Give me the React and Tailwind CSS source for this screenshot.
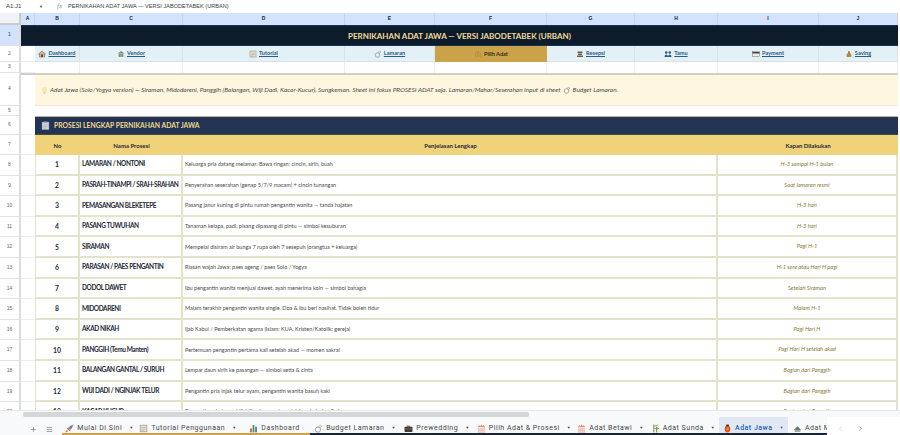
import React from "react";
import { Plus, Menu, ChevronLeft, ChevronRight } from "lucide-react";

const Svg = ({ s = 8, children }) => (
  <svg width={s} height={s} viewBox="0 0 16 16" className="shrink-0">{children}</svg>
);
const Note = ({ s }) => (
  <Svg s={s}><rect x="2" y="2" width="12" height="12" fill="#e8e4d8" stroke="#8a8878" strokeWidth="1" /><path d="M4 6h8M4 9h8M4 12h6" stroke="#a5a394" /></Svg>
);
const Ring = ({ s }) => (
  <Svg s={s}><circle cx="7" cy="10" r="4.6" fill="none" stroke="#77808a" strokeWidth="1.2" /><path d="M8 5l3-3 3 2-3 3z" fill="#dfe7ee" stroke="#77808a" strokeWidth="0.8" /></Svg>
);
const Home = ({ s }) => (
  <Svg s={s}><path d="M1 8l7-6 7 6-2 0v6H3V8z" fill="#c9b9a0" stroke="#7a4a32" /><rect x="6" y="9" width="4" height="5" fill="#7a4a32" /></Svg>
);
const Vendor = ({ s }) => (
  <Svg s={s}><path d="M1 7l7-5 7 5z" fill="#7d8c7d" /><rect x="3" y="7" width="10" height="7" fill="#aab3aa" /><path d="M5 8v6M8 8v6M11 8v6" stroke="#5f6b5f" /></Svg>
);
const Temple = ({ s, c = "#b48a3a" }) => (
  <Svg s={s}><path d="M2 5l6-3 6 3z" fill={c} /><path d="M3 6v8M6.5 6v8M9.5 6v8M13 6v8" stroke={c} strokeWidth="1.4" /></Svg>
);
const Resepsi = ({ s }) => (
  <Svg s={s}><path d="M3 3h10v3H3zM4 7h8v3H4zM2 11h12v3H2z" fill="#6b5a4a" /></Svg>
);
const Tamu = ({ s }) => (
  <Svg s={s}><circle cx="4.5" cy="5" r="2.6" fill="#355a80" /><circle cx="11.5" cy="5" r="2.6" fill="#355a80" /><path d="M1 14c0-7 7-7 7 0zM8 14c0-7 7-7 7 0z" fill="#355a80" /></Svg>
);
const Card = ({ s }) => (
  <Svg s={s}><rect x="1" y="3" width="14" height="10" fill="#f0ede0" stroke="#777" /><rect x="1" y="4" width="14" height="3" fill="#444" /></Svg>
);
const Bag = ({ s }) => (
  <Svg s={s}><path d="M6 2h4l-1 3c4 2 5 9 3 9H4C2 14 3 7 7 5z" fill="#b08a4a" /><path d="M6 5h4" stroke="#6e5425" /></Svg>
);
const Bulb = ({ s }) => (
  <Svg s={s}><path d="M8 1a5 5 0 0 0-3 9v2h6v-2a5 5 0 0 0-3-9z" fill="#fbe9a6" stroke="#dcc987" strokeWidth="0.7" /><rect x="6" y="13" width="4" height="2" fill="#bbb" /></Svg>
);
const Clip = ({ s }) => (
  <Svg s={s}><rect x="2" y="2" width="12" height="13" fill="#d8dce2" stroke="#aab0b8" /><rect x="5" y="1" width="6" height="3" fill="#9ca3ad" /><path d="M4 7h8M4 10h8M4 12.5h6" stroke="#8f96a1" /></Svg>
);
const Rocket = ({ s }) => (
  <Svg s={s}><path d="M5 10c1-5 5-8 10-9-1 5-4 9-9 10z" fill="#8a929c" /><path d="M1 15c0-3 1-4 3-4l1 1c0 2-1 3-4 3z" fill="#e8742c" /><circle cx="10.5" cy="5.5" r="1.4" fill="#3e6f9e" /><path d="M4 7l3-1-3 4zM9 12l1-3-4 3z" fill="#c0392b" /></Svg>
);
const Chart = ({ s }) => (
  <Svg s={s}><rect x="2" y="8" width="3" height="7" fill="#c0503c" /><rect x="6.5" y="2" width="3" height="13" fill="#3f8f4f" /><rect x="11" y="5" width="3" height="10" fill="#3572b0" /></Svg>
);
const Case = ({ s }) => (
  <Svg s={s}><rect x="1" y="5" width="14" height="9" rx="1" fill="#3d3d3d" /><rect x="5" y="3" width="6" height="2" fill="#7a5a33" /><rect x="1" y="8" width="14" height="1.5" fill="#8a6a3a" /></Svg>
);
const Gate = ({ s }) => (
  <Svg s={s}><rect x="2" y="5" width="12" height="10" fill="#f7ded8" stroke="#d99a8e" strokeWidth="0.7" /><path d="M2 5l2-3 2 2 2-3 2 3 2-2 2 3z" fill="#e3786a" /><path d="M4 9h8M4 12h8" stroke="#d99a8e" /></Svg>
);
const Bamboo = ({ s }) => (
  <Svg s={s}><path d="M5 1v14M10 5v10" stroke="#7f9a45" strokeWidth="2" /><path d="M6 4l6-2M6 8l7 1M10 6l5 3" stroke="#5d8a3a" strokeWidth="1.2" /></Svg>
);
const Lantern = ({ s }) => (
  <Svg s={s}><ellipse cx="8" cy="9" rx="5" ry="6" fill="#d9541e" /><rect x="5.5" y="1" width="5" height="3" fill="#3d3a36" /><ellipse cx="8" cy="9" rx="2" ry="3" fill="#f2954c" /></Svg>
);
const Roof = ({ s }) => (
  <Svg s={s}><path d="M1 11l7-7 7 7z" fill="#6d7670" /><rect x="3" y="11" width="10" height="3" fill="#9aa39c" /></Svg>
);

const Head = ({ children, on }) => (
  <div className={`flex items-center justify-center text-[5px] font-['Liberation_Sans',sans-serif] text-[#5f6368] border-b border-[#e2e3e4] border-r-2 border-r-[#dcdcdc] ${on ? "bg-[#d3e3fd] font-bold text-[#0b2a55]" : "bg-white"}`}>
    {children}
  </div>
);
const Fill = () => <div className="bg-white" />;
const A = () => <div className="bg-white border-b border-[#eceff1]" />;

const nav = [
  [Home, "Dashboard"],
  [Vendor, "Vendor"],
  [Note, "Tutorial"],
  [Ring, "Lamaran"],
  [Temple, "Pilih Adat", true],
  [Resepsi, "Resepsi"],
  [Tamu, "Tamu"],
  [Card, "Payment"],
  [Bag, "Saving"],
];

const rows = [
  ["LAMARAN / NONTONI", "Keluarga pria datang melamar. Bawa ringan: cincin, sirih, buah", "H-3 sampai H-1 bulan"],
  ["PASRAH-TINAMPI / SRAH-SRAHAN", "Penyerahan seserahan (genap 5/7/9 macam) + cincin tunangan", "Saat lamaran resmi"],
  ["PEMASANGAN BLEKETEPE", "Pasang janur kuning di pintu rumah pengantin wanita — tanda hajatan", "H-3 hari"],
  ["PASANG TUWUHAN", "Tanaman kelapa, padi, pisang dipasang di pintu — simbol kesuburan", "H-3 hari"],
  ["SIRAMAN", "Mempelai disiram air bunga 7 rupa oleh 7 sesepuh (orangtua + keluarga)", "Pagi H-1"],
  ["PARASAN / PAES PENGANTIN", "Riasan wajah Jawa: paes ageng / paes Solo / Yogya", "H-1 sore atau Hari H pagi"],
  ["DODOL DAWET", "Ibu pengantin wanita menjual dawet, ayah menerima koin — simbol bahagia", "Setelah Siraman"],
  ["MIDODARENI", "Malam terakhir pengantin wanita single. Doa & ibu beri nasihat. Tidak boleh tidur", "Malam H-1"],
  ["AKAD NIKAH", "Ijab Kabul / Pemberkatan agama (Islam: KUA, Kristen/Katolik: gereja)", "Pagi Hari H"],
  ["PANGGIH (Temu Manten)", "Pertemuan pengantin pertama kali setelah akad — momen sakral", "Pagi Hari H setelah akad"],
  ["BALANGAN GANTAL / SURUH", "Lempar daun sirih ke pasangan — simbol setia & cinta", "Bagian dari Panggih"],
  ["WIJI DADI / NGINJAK TELUR", "Pengantin pria injak telur ayam, pengantin wanita basuh kaki", "Bagian dari Panggih"],
  ["KACAR KUCUR", "Pengantin pria tuang biji-bijian ke pangkuan istri — simbol nafkah", "Bagian dari Panggih"],
];

const tabs = [
  [Rocket, "Mulai Di Sini", "w-[75px]", "border-[#c9a24a]"],
  [Note, "Tutorial Penggunaan", "w-[102px]", "border-[#c9a24a]"],
  [Chart, "Dashboard", "w-[71px]", "border-[#c9a24a]", true],
  [Ring, "Budget Lamaran", "w-[90px]", "border-[#1c2533]"],
  [Case, "Prewedding", "w-[74px]", "border-[#1c2533]"],
  [Gate, "Pilih Adat & Prosesi", "w-[100px]", "border-[#1c2533]"],
  [Gate, "Adat Betawi", "w-[73px]", "border-[#1c2533]"],
  [Bamboo, "Adat Sunda", "w-[72px]", "border-[#1c2533]"],
  [Lantern, "Adat Jawa", "w-[69px]", "border-[#1c2533]"],
];

const colNames = ["A", "B", "C", "D", "E", "F", "G", "H", "I", "J"];

export default function App() {
  return (
    <div className="w-[900px] h-[435px] overflow-hidden flex flex-col bg-white font-['Lato','Liberation_Sans',sans-serif]">
      <div className="h-[13px] shrink-0 flex items-center bg-white text-[#3c4043] font-['Liberation_Sans',sans-serif] text-[5.6px]">
        <span className="w-[39px] pl-[6px] text-[6px]">A1:J1</span>
        <span className="w-[18px] text-[4px]">▼</span>
        <span className="w-[11px] italic text-[#8a8d91] font-['Liberation_Serif',serif] text-[7px]">fx</span>
        <span>PERNIKAHAN ADAT JAWA — VERSI JABODETABEK (URBAN)</span>
      </div>

      <div className="h-[397px] shrink-0 overflow-hidden grid content-start grid-cols-[21px_14px_45px_103px_162px_90px_112px_88px_83px_101px_79px_2px] grid-rows-[12px_21px_16px_11px_33px_10px_19px_20px_repeat(13,20.6px)]">
        {/* column headers */}
        <div className="bg-[#f1f3f4] border-r-2 border-b-2 border-[#c9cccf]" />
        {colNames.map((n) => (
          <div key={n} className="bg-[#d3e3fd] border-r border-[#c5d4ec] flex items-center justify-center text-[5px] font-bold text-[#0b2a55] font-['Liberation_Sans',sans-serif]">
            {n}
          </div>
        ))}
        <Fill />

        {/* row 1 */}
        <Head on>1</Head>
        <div className="col-span-10 bg-[#0d1b2a] border-y border-[#16335c] flex items-center justify-center text-[8px] font-bold text-[#f2dc9b]">
          PERNIKAHAN ADAT JAWA — VERSI JABODETABEK (URBAN)
        </div>
        <Fill />

        {/* row 2 */}
        <Head>2</Head>
        <A />
        {nav.map(([I, t, on]) => (
          <div key={t} className={`flex items-center justify-center gap-[2px] text-[5.6px] ${on ? "bg-[#c9a24a] text-[#3a2c0c] font-bold" : "bg-[#e3f0f6] text-[#2c5c8a] font-bold underline border-r border-[#d6e4ea] border-b border-b-[#d8e0e2]"}`}>
            <I s={8} />
            <span>{t}</span>
          </div>
        ))}
        <Fill />

        {/* row 3 */}
        <Head>3</Head>
        <A />
        {nav.map(([, t]) => (
          <div key={t} className="bg-white border-r border-[#eceff1]" />
        ))}
        <Fill />

        {/* row 4 */}
        <Head>4</Head>
        <div className="bg-white border-t-2 border-[#cfcdc6]" />
        <div className="col-span-9 bg-[#fff6e0] border-t-2 border-b border-t-[#cfcdc6] border-b-[#f2e8cd] flex items-center gap-[2px] pl-[6px] text-[6.47px] italic text-[#4a4a4a]">
          <Bulb s={7} />
          <span>Adat Jawa (Solo/Yogya version) — Siraman, Midodareni, Panggih (Balangan, Wiji Dadi, Kacar-Kucur), Sungkeman. Sheet ini fokus PROSESI ADAT saja. Lamaran/Mahar/Seserahan input di sheet</span>
          <Ring s={8} />
          <span>Budget Lamaran.</span>
        </div>
        <Fill />

        {/* row 5 */}
        <Head>5</Head>
        <div className="col-span-10 bg-white" />
        <Fill />

        {/* row 6 */}
        <Head>6</Head>
        <A />
        <div className="col-span-9 bg-[#223354] border-t border-[#b9b6a0] border-b border-b-[#4b4a3e] flex items-center gap-[4px] pl-[6px] text-[6.8px] font-bold text-[#efd88f]">
          <Clip s={9} />
          <span>PROSESI LENGKAP PERNIKAHAN ADAT JAWA</span>
        </div>
        <Fill />

        {/* row 7 */}
        <Head>7</Head>
        <A />
        <div className="bg-[#f0d27a] flex items-center justify-center text-[6px] font-bold text-[#1f2a37]">No</div>
        <div className="bg-[#f0d27a] flex items-center justify-center text-[6px] font-bold text-[#1f2a37]">Nama Prosesi</div>
        <div className="col-span-5 bg-[#f0d27a] flex items-center justify-center text-[6px] font-bold text-[#1f2a37]">Penjelasan Lengkap</div>
        <div className="col-span-2 bg-[#f0d27a] flex items-center justify-center text-[6px] font-bold text-[#1f2a37]">Kapan Dilakukan</div>
        <Fill />

        {/* body */}
        {rows.map(([name, desc, when], i) => (
          <React.Fragment key={name}>
            <Head>{i + 8}</Head>
            <A />
            <div className="bg-white border-r-2 border-b-2 border-[#e3e2cb] border-l flex items-center justify-center text-[6.8px] font-bold text-[#1f2a37]">{i + 1}</div>
            <div className="bg-white border-r-2 border-b-2 border-[#e3e2cb] flex items-center pl-[2px] text-[6.5px] tracking-[-0.4px] font-bold text-[#1f2a37] whitespace-nowrap overflow-hidden">{name}</div>
            <div className="col-span-5 bg-white border-r-2 border-b-2 border-[#e3e2cb] flex items-center pl-[2px] text-[5.5px] text-[#4a4a4a] whitespace-nowrap overflow-hidden">{desc}</div>
            <div className="col-span-2 bg-white border-r-2 border-b-2 border-[#e3e2cb] flex items-center justify-center text-[5.7px] italic text-[#8a7a3a]">{when}</div>
            <Fill />
          </React.Fragment>
        ))}
      </div>

      {/* scrollbar */}
      <div className="h-[7px] shrink-0 bg-[#f8f9fa] border-t border-[#e6e8ea] flex items-center pl-[23px] pr-[2px]">
        <div className="h-[5px] w-[506px] bg-[#d5d6d8] rounded-[2px]" />
      </div>

      {/* tabs */}
      <div className="h-[18px] shrink-0 bg-[#f8f9fa] flex items-stretch font-['Roboto',sans-serif] text-[7px] tracking-[0.5px] text-[#44474a]">
        <div className="w-[62px] flex items-center justify-end gap-[9px] pr-[9px] pt-[6px] text-[#5f6368]">
          <Plus size={7} />
          <Menu size={7} />
        </div>
        {tabs.map(([I, t, w, b, noCaret]) => (
          <div key={t} className={`${w} flex items-center justify-center gap-[3px] pt-[6px] border-b-2 ${b} ${t === "Adat Jawa" ? "bg-[#e1e8f3] text-[#1a5fb4] font-medium" : ""}`}>
            <I s={9} />
            <span className="whitespace-nowrap">{t}</span>
            {!noCaret && <span className="text-[4px] ml-[4px]">▼</span>}
          </div>
        ))}
        <div className="w-[39px] flex items-center gap-[3px] pl-[5px] pt-[6px] overflow-hidden border-b-2 border-[#1c2533]">
          <Roof s={9} />
          <span className="whitespace-nowrap">Adat Minang</span>
        </div>
        <div className="flex-1 flex items-center gap-[13px] pl-[10px] pt-[5px] bg-white text-[#5f6368]">
          <ChevronLeft size={7} className="text-[#b8bbbe]" />
          <ChevronRight size={7} />
        </div>
      </div>
    </div>
  );
}
